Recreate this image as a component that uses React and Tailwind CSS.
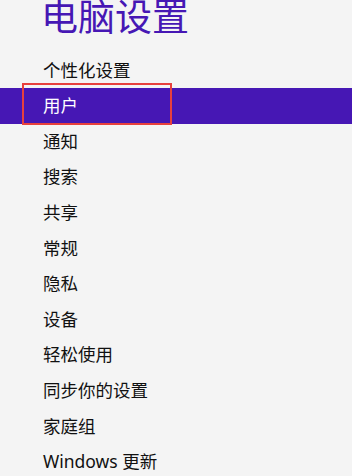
import React from 'react';

const items = [
  '个性化设置',
  '用户',
  '通知',
  '搜索',
  '共享',
  '常规',
  '隐私',
  '设备',
  '轻松使用',
  '同步你的设置',
  '家庭组',
  'Windows 更新',
];

export default function App() {
  return (
    <div
      className="relative w-[352px] h-[476px] overflow-hidden bg-[#f4f4f4]"
      style={{ fontFamily: '"Noto Sans", "Noto Sans CJK SC", sans-serif' }}
    >
      {/* Title */}
      <div className="h-[54px] pl-[41px] pt-0">
        <h1 className="text-[37px] leading-[36px] text-[#4617b4] font-normal -mt-[1px]">电脑设置</h1>
      </div>

      {/* Menu */}
      <ul className="-mt-[0.5px]">
        {items.map((label, i) => (
          <li
            key={label}
            className={
              'h-[35.6px] flex items-center pl-[43px] pb-[1px] text-[17.5px] ' +
              (i === 1 ? 'bg-[#4617b4] text-white' : 'text-[#111111]')
            }
          >
            {label}
          </li>
        ))}
      </ul>

      {/* Annotation box */}
      <div className="absolute left-[22px] top-[83px] w-[150px] h-[42px] border-2 border-[#e8403d]" />
    </div>
  );
}
